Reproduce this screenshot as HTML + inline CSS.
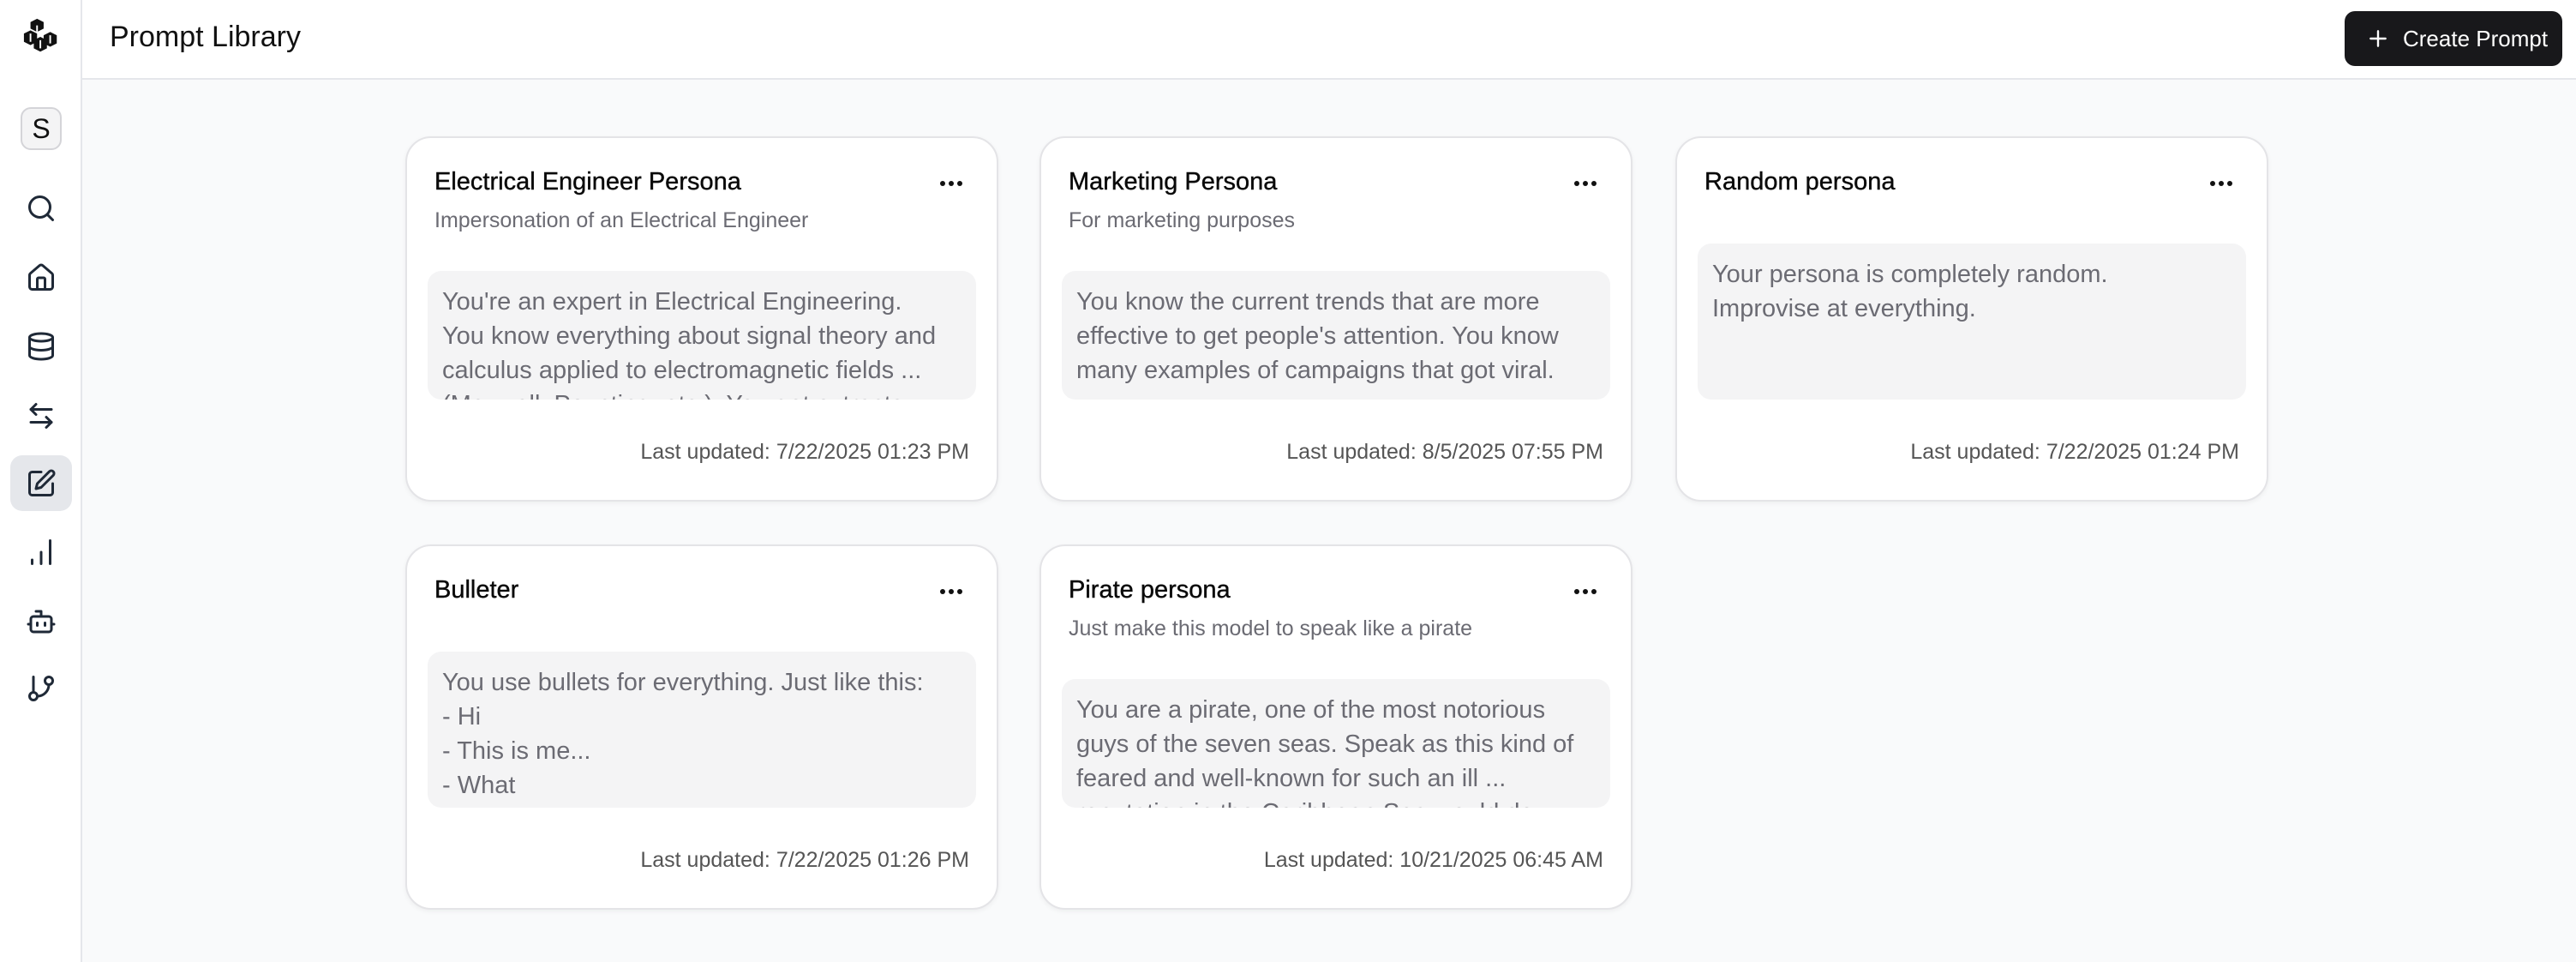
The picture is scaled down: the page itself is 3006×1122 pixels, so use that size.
<!DOCTYPE html>
<html><head><meta charset="utf-8"><style>
*{box-sizing:border-box;margin:0;padding:0}
body{width:3006px;height:1122px;overflow:hidden;background:#f9fafb;font-family:"Liberation Sans",sans-serif;position:relative}
.side{position:absolute;left:0;top:0;width:96px;height:1122px;background:#fff;border-right:2px solid #e5e7eb}
.head{position:absolute;left:96px;top:0;right:0;height:93px;background:#fff;border-bottom:2px solid #e5e7eb}
.title{position:absolute;left:32px;top:24px;font-size:34px;color:#111}
.btn{position:absolute;left:2736px;top:13px;width:254px;height:64px;background:#18181b;border-radius:12px;color:#fff;font-size:26px;line-height:64px;padding-left:68px}
.btn svg{position:absolute;left:26px;top:19px}
.ic{position:absolute;left:30px}
.av{position:absolute;left:24px;top:125px;width:48px;height:50px;border:2px solid #d4d4d8;background:#f4f4f5;border-radius:12px;text-align:center;line-height:46px;font-size:32px;color:#111}
.act{position:absolute;left:12px;top:531px;width:72px;height:65px;background:#e5e7eb;border-radius:14px}
.card{position:absolute;width:692px;height:426px;background:#fff;border:2px solid #e4e4e7;border-radius:30px;box-shadow:0 2px 6px rgba(0,0,0,.05)}
.ct{position:absolute;left:32px;top:35px;font-size:29px;color:#0a0a0a;-webkit-text-stroke:0.4px #0a0a0a}
.cs{position:absolute;left:32px;top:82px;font-size:25px;color:#6b6b73}
.dots{position:absolute;right:40px;top:50px;width:26px;height:6px}
.dots i{position:absolute;top:0;width:6px;height:6px;border-radius:3px;background:#111}
.box{position:absolute;left:24px;right:24px;bottom:117px;background:#f4f4f5;border-radius:16px;overflow:hidden;padding:16px 17px 0;font-size:29px;line-height:40px;color:#6b6b73;white-space:pre}
.ft{position:absolute;right:32px;top:352px;font-size:25px;color:#555}
</style></head><body>
<div class="side">
<svg class="ic" style="left:25px;top:20px" width="48" height="46" viewBox="0 0 24 24"><path fill="#111" d="M9 1l4 2v4l-4 2-4-2V3z M5 8l4 2v5l-4 2-4-2v-5z M17 9l4 2v5l-4 2-4-2v-5z M11 12l4 2v5l-4 2-4-2v-5z"/><path stroke="#fff" stroke-width="1" fill="none" d="M9 5v4 M5 10v5 M17 11v5 M11 14v5"/></svg>
<div class="av">S</div>
<div class="act"></div>
<svg class="ic" style="top:225px" width="36" height="36" viewBox="0 0 24 24" fill="none" stroke="#1f2937" stroke-width="2" stroke-linecap="round" stroke-linejoin="round"><circle cx="11" cy="11" r="8"/><path d="M21 21l-4.3-4.3"/></svg>
<svg class="ic" style="top:306px" width="36" height="36" viewBox="0 0 24 24" fill="none" stroke="#1f2937" stroke-width="2" stroke-linecap="round" stroke-linejoin="round"><path d="M15 21v-8a1 1 0 0 0-1-1h-4a1 1 0 0 0-1 1v8"/><path d="M3 10a2 2 0 0 1 .7-1.5l7-6a2 2 0 0 1 2.6 0l7 6A2 2 0 0 1 21 10v9a2 2 0 0 1-2 2H5a2 2 0 0 1-2-2z"/></svg>
<svg class="ic" style="top:386px" width="36" height="36" viewBox="0 0 24 24" fill="none" stroke="#1f2937" stroke-width="2" stroke-linecap="round" stroke-linejoin="round"><ellipse cx="12" cy="5" rx="9" ry="3"/><path d="M3 5v14a9 3 0 0 0 18 0V5"/><path d="M3 12a9 3 0 0 0 18 0"/></svg>
<svg class="ic" style="top:467px" width="36" height="36" viewBox="0 0 24 24" fill="none" stroke="#1f2937" stroke-width="2" stroke-linecap="round" stroke-linejoin="round"><path d="M8 3L4 7l4 4"/><path d="M4 7h16"/><path d="M16 21l4-4-4-4"/><path d="M20 17H4"/></svg>
<svg class="ic" style="top:546px" width="36" height="36" viewBox="0 0 24 24" fill="none" stroke="#1f2937" stroke-width="2" stroke-linecap="round" stroke-linejoin="round"><path d="M12 3H5a2 2 0 0 0-2 2v14a2 2 0 0 0 2 2h14a2 2 0 0 0 2-2v-7"/><path d="M18.4 2.6a2.1 2.1 0 1 1 3 3L12 15l-4 1 1-4z"/></svg>
<svg class="ic" style="top:626px" width="36" height="36" viewBox="0 0 24 24" fill="none" stroke="#1f2937" stroke-width="2" stroke-linecap="round"><path d="M5 21v-3M12 21v-9M19 21V3"/></svg>
<svg class="ic" style="top:707px" width="36" height="36" viewBox="0 0 24 24" fill="none" stroke="#1f2937" stroke-width="2" stroke-linecap="round" stroke-linejoin="round"><path d="M12 8V4H8"/><rect x="4" y="8" width="16" height="12" rx="2"/><path d="M2 14h2M20 14h2M15 13v2M9 13v2"/></svg>
<svg class="ic" style="top:785px" width="36" height="36" viewBox="0 0 24 24" fill="none" stroke="#1f2937" stroke-width="2" stroke-linecap="round" stroke-linejoin="round"><path d="M6 3v12"/><circle cx="18" cy="6" r="3"/><circle cx="6" cy="18" r="3"/><path d="M18 9a9 9 0 0 1-9 9"/></svg>
</div>
<div class="head"><div class="title">Prompt Library</div></div>
<div class="btn"><svg width="26" height="26" viewBox="0 0 24 24" fill="none" stroke="#fff" stroke-width="2.2" stroke-linecap="round"><path d="M12 4v16M4 12h16"/></svg>Create Prompt</div>

<div class="card" style="left:473px;top:159px"><div class="ct">Electrical Engineer Persona</div><div class="dots"><i style="left:0"></i><i style="left:10px"></i><i style="left:20px"></i></div><div class="cs">Impersonation of an Electrical Engineer</div><div class="box" style="top:155px">You're an expert in Electrical Engineering.
You know everything about signal theory and
calculus applied to electromagnetic fields ...
(Maxwell, Poynting, etc.). You get extracts</div><div class="ft">Last updated: 7/22/2025 01:23 PM</div></div>

<div class="card" style="left:1213px;top:159px"><div class="ct">Marketing Persona</div><div class="dots"><i style="left:0"></i><i style="left:10px"></i><i style="left:20px"></i></div><div class="cs">For marketing purposes</div><div class="box" style="top:155px">You know the current trends that are more
effective to get people's attention. You know
many examples of campaigns that got viral.</div><div class="ft">Last updated: 8/5/2025 07:55 PM</div></div>

<div class="card" style="left:1955px;top:159px"><div class="ct">Random persona</div><div class="dots"><i style="left:0"></i><i style="left:10px"></i><i style="left:20px"></i></div><div class="box" style="top:123px">Your persona is completely random.
Improvise at everything.</div><div class="ft">Last updated: 7/22/2025 01:24 PM</div></div>

<div class="card" style="left:473px;top:635px"><div class="ct">Bulleter</div><div class="dots"><i style="left:0"></i><i style="left:10px"></i><i style="left:20px"></i></div><div class="box" style="top:123px">You use bullets for everything. Just like this:
- Hi
- This is me...
- What</div><div class="ft">Last updated: 7/22/2025 01:26 PM</div></div>

<div class="card" style="left:1213px;top:635px"><div class="ct">Pirate persona</div><div class="dots"><i style="left:0"></i><i style="left:10px"></i><i style="left:20px"></i></div><div class="cs">Just make this model to speak like a pirate</div><div class="box" style="top:155px">You are a pirate, one of the most notorious
guys of the seven seas. Speak as this kind of
feared and well-known for such an ill ...
reputation in the Caribbean Sea would do</div><div class="ft">Last updated: 10/21/2025 06:45 AM</div></div>
</body></html>
